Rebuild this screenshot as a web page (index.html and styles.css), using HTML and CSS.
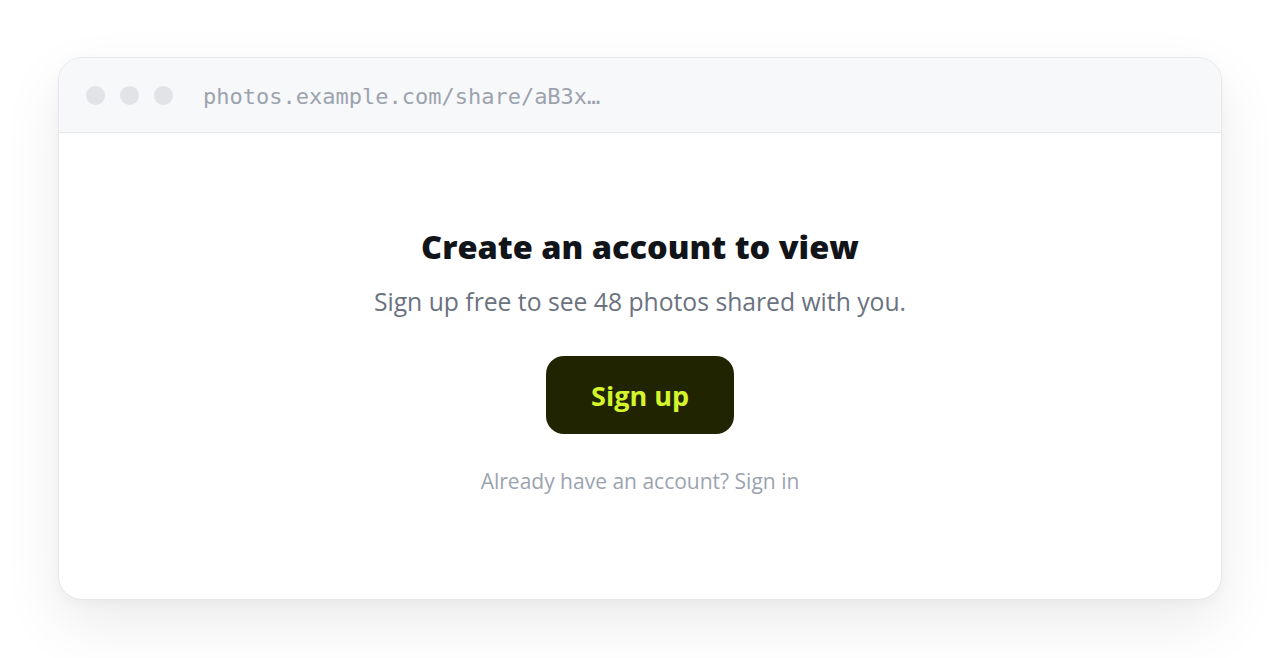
FILE: index.html
```html
<!DOCTYPE html>
<html lang="en">
<head>
<meta charset="utf-8">
<title>Create an account to view</title>
<link rel="stylesheet" href="styles.css">
</head>
<body>
<div class="stage">
  <div class="window">
    <div class="bar">
      <div class="dots"><span class="dot"></span><span class="dot"></span><span class="dot"></span></div>
      <div class="url">photos.example.com/share/aB3x…</div>
    </div>
    <div class="content">
      <h1 class="title">Create an account to view</h1>
      <p class="sub">Sign up free to see 48 photos shared with you.</p>
      <button class="cta">Sign up</button>
      <p class="signin">Already have an account? Sign in</p>
    </div>
  </div>
</div>
</body>
</html>
```
FILE: styles.css
```css
* { box-sizing: border-box; }
html, body { margin: 0; padding: 0; background: #ffffff; }
body { font-family: "Open Sans", "Noto Sans", sans-serif; }
.stage {
  width: 1280px;
  height: 658px;
  padding: 57px 58px 0 58px;
  overflow: hidden;
}
.window {
  width: 1164px;
  height: 543px;
  border: 1px solid #e5e7eb;
  border-radius: 24px;
  background: #fff;
  box-shadow: 0 24px 60px rgba(0,0,0,0.08), 0 4px 12px rgba(0,0,0,0.03);
  display: flex;
  flex-direction: column;
  overflow: hidden;
}
.bar {
  height: 75px;
  flex: none;
  background: #f7f8f9;
  border-bottom: 1px solid #e5e7eb;
  display: flex;
  align-items: center;
  padding-left: 27px;
}
.dots { display: flex; gap: 15px; }
.dot { width: 19px; height: 19px; border-radius: 50%; background: #e1e3e6; }
.url {
  margin-left: 30px;
  font-family: "DejaVu Sans Mono", "Liberation Mono", monospace;
  font-size: 22px;
  color: #9ca3af;
  padding-top: 2px;
}
.content {
  flex: 1;
  display: flex;
  flex-direction: column;
  align-items: center;
  padding-top: 90px;
}
.title {
  margin: 0;
  font-size: 32.5px;
  font-weight: 800;
  color: #111418;
  letter-spacing: 0;
  line-height: 48px;
}
.sub {
  margin: 14px 0 0;
  font-size: 24.7px;
  color: #6b7280;
  line-height: 34px;
}
.cta {
  margin-top: 37px;
  width: 188px;
  height: 78px;
  border: none;
  border-radius: 18px;
  background: #212400;
  color: #d4f52c;
  font-family: "Open Sans", "Noto Sans", sans-serif;
  font-size: 27px;
  font-weight: 700;
  padding: 0;
}
.signin {
  margin: 32px 0 0;
  font-size: 21px;
  color: #9ca3af;
  line-height: 30px;
}
```
